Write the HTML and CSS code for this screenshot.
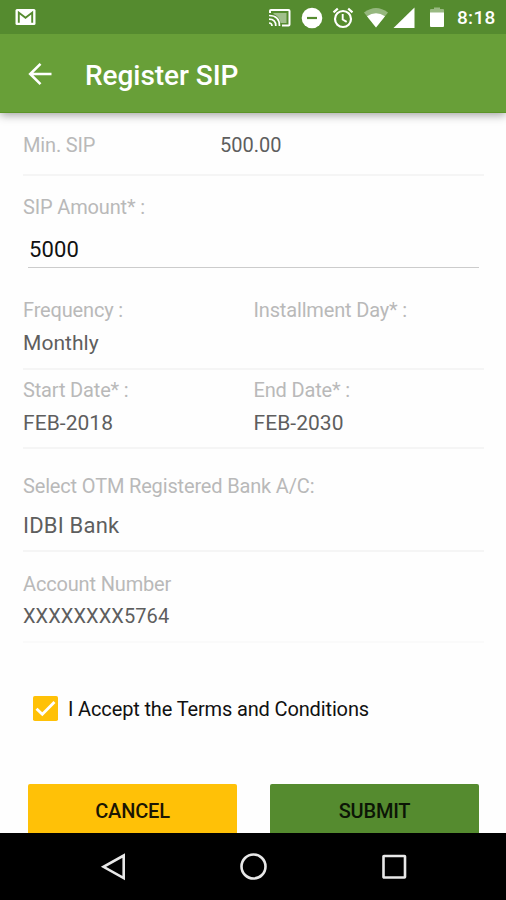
FILE: index.html
```html
<!DOCTYPE html>
<html lang="en">
<head>
<meta charset="utf-8">
<title>Register SIP</title>
<link rel="stylesheet" href="styles.css">
</head>
<body>
<div class="screen">
  <div class="status">
    <svg class="mail" width="22" height="18" viewBox="0 0 22 18"><rect x=".5" y="1" width="20" height="16" rx="1.5" fill="#fff"/><path d="M3.800 14.800V4.600l6.700 5.200 6.700-5.200v10.200" fill="none" stroke="#558b2f" stroke-width="1.900"/></svg>
    <div class="status-icons">
      <svg width="24" height="22" viewBox="0 0 24 22"><path d="M5.500 6h13v10h-6C12 12 9.500 8.500 5.500 7z" fill="#fff" opacity=".45"/><path d="M2 6V3.800Q2 3 3 3h17.500q1 0 1 1v13.500q0 1-1 1H14" fill="none" stroke="#fff" stroke-width="2"/><path d="M1 16q3 0 3 3M1 12.200q6.800 0 6.800 6.800M1 8.500q10.500 0 10.500 10.500" fill="none" stroke="#fff" stroke-width="1.700"/></svg>
      <svg width="22" height="22" viewBox="0 0 22 22"><circle cx="11" cy="11" r="10.300" fill="#fff"/><path d="M6 11h10" stroke="#558b2f" stroke-width="2.200"/></svg>
      <svg width="22" height="22" viewBox="0 0 22 22"><circle cx="11" cy="12" r="8" fill="none" stroke="#fff" stroke-width="2.200"/><path d="M1.500 5.300 5.800 1.700M20.500 5.300 16.200 1.700" stroke="#fff" stroke-width="2.200"/><path d="M10.700 7v5.500l4 2.400" fill="none" stroke="#fff" stroke-width="1.900"/></svg>
      <svg width="26" height="22" viewBox="0 0 26 22"><path d="M1 5.500Q13-3.500 25 5.500L13 20.500z" fill="#fff" opacity=".38"/><path d="M4 9.300q9-6.200 18 0L13 20.500z" fill="#fff"/></svg>
      <svg class="signal" width="22" height="22" viewBox="0 0 22 22"><path d="M21.500.5v20.500H.5z" fill="#fff"/></svg>
      <svg class="battery" width="16" height="22" viewBox="0 0 16 22"><path d="M1 6V3q0-1 1-1h3V.5h6V2h3q1 0 1 1v3z" fill="#fff" opacity=".4"/><path d="M1 5.500h14V19q0 1-1 1H2q-1 0-1-1z" fill="#fff"/></svg>
      <span class="time">8:18</span>
    </div>
  </div>
  <header class="appbar">
    <svg width="24" height="24" viewBox="0 0 24 24"><path d="M23.500 12H2.500M12.500 1.800 2.200 12l10.300 10.200" fill="none" stroke="#fff" stroke-width="2.600"/></svg>
    <h1>Register SIP</h1>
  </header>
  <main class="form">
    <div class="row min"><span class="label">Min. SIP</span><span class="value">500.00</span></div>
    <div class="amount"><span class="label">SIP Amount* :</span><div class="input">5000</div></div>
    <div class="row pair freq">
      <div><div class="label">Frequency :</div><div class="value">Monthly</div></div>
      <div><div class="label">Installment Day* :</div></div>
    </div>
    <div class="row pair dates">
      <div><div class="label">Start Date* :</div><div class="value">FEB-2018</div></div>
      <div><div class="label">End Date* :</div><div class="value">FEB-2030</div></div>
    </div>
    <div class="row bank"><div class="label">Select OTM Registered Bank A/C:</div><div class="value">IDBI Bank</div></div>
    <div class="row account"><div class="label">Account Number</div><div class="value">XXXXXXXX5764</div></div>
    <div class="terms">
      <svg width="25" height="25" viewBox="0 0 25 25"><rect width="25" height="25" rx="1.800" fill="#ffc107"/><path d="M3.500 12.700 9.300 18.300 21.500 6" fill="none" stroke="#fff" stroke-width="2.800"/></svg>
      <span>I Accept the Terms and Conditions</span>
    </div>
    <div class="buttons"><div class="btn cancel">CANCEL</div><div class="btn submit">SUBMIT</div></div>
  </main>
  <nav class="nav">
    <svg width="28" height="28" viewBox="0 0 28 28"><path d="M23.700 2.500v22.600L3.500 13.800z"/></svg>
    <svg width="28" height="28" viewBox="0 0 28 28"><circle cx="13.500" cy="13.500" r="12"/></svg>
    <svg width="28" height="28" viewBox="0 0 28 28"><rect x="3.500" y="3" width="21.500" height="21.500" rx=".5"/></svg>
  </nav>
</div>
</body>
</html>
```
FILE: styles.css
```css
* { box-sizing: border-box; }
body { margin: 0; font-family: Roboto, "Liberation Sans", sans-serif; background: #fff; }
svg { display: block; flex: none; }
.screen { width: 506px; height: 900px; display: flex; flex-direction: column; overflow: hidden; }
.status { height: 34px; flex: none; background: #558b2f; display: flex; justify-content: space-between; padding: 8px 10px 0 15px; position: relative; z-index: 2; }
.status-icons { display: flex; gap: 9px; height: 22px; align-items: center; margin-top: -1px; }
.status-icons svg { position: relative; left: 1px; }
.status-icons .signal { margin-left: -4px; left: 0; }
.status-icons .battery { margin-left: 5px; left: 0; }
.time { width: 39px; margin-left: 3px; font-size: 19px; font-weight: 500; line-height: 24px; color: #fff; letter-spacing: .3px; white-space: nowrap; }
.appbar { height: 79px; flex: none; background: #689f38; border-bottom: 1px solid #5b9427; box-shadow: 0 2px 9px rgba(0,0,0,.38); display: flex; align-items: center; padding: 2px 0 0 28px; position: relative; z-index: 1; }
h1 { margin: 3px 0 0 33px; font-size: 28px; font-weight: 500; letter-spacing: -.05px; line-height: 32px; color: #fff; white-space: nowrap; }
.form { height: 720px; flex: none; padding: 0 22px 0 23px; overflow: hidden; background: #fefefe; }
.row { border-bottom: 2px solid #f5f5f5; }
.label, .value { font-size: 20px; line-height: 24px; white-space: nowrap; }
.label { color: #b9b9b9; letter-spacing: -.16px; }
.value { color: #5e5e5e; }
.min { height: 63px; display: grid; grid-template-columns: 197px 1fr; padding-top: 20px; }
.amount { height: 122px; padding-top: 19px; }
.input { margin: 14px 5px 0; height: 35px; padding: 3px 1px 0; font-size: 22px; line-height: 28px; letter-spacing: .1px; color: #111; border-bottom: 1px solid #ccc; }
.pair { display: grid; grid-template-columns: 230.500px 1fr; }
.pair .value { margin-top: 9px; font-size: 21px; letter-spacing: .05px; }
.freq { height: 72px; }
.dates { height: 79px; padding-top: 8px; }
.bank { height: 103px; padding-top: 25px; }
.bank .value { margin-top: 16px; font-size: 22px; letter-spacing: .2px; }
.account { height: 91px; padding-top: 20px; border-color: #fafafa; }
.account .value { margin-top: 8px; letter-spacing: .08px; }
.terms { display: flex; gap: 10px; align-items: center; height: 25px; margin: 53px 0 0 10px; font-size: 20px; letter-spacing: -.14px; color: #111; white-space: nowrap; }
.terms span { padding-top: 1px; }
.buttons { display: grid; grid-template-columns: 209px 209px; gap: 33px; margin: 63px 0 0 5px; }
.btn { height: 54px; border-radius: 2px; text-align: center; font-size: 20px; font-weight: 500; line-height: 54px; letter-spacing: -.2px; }
.cancel { background: #ffc107; color: #1b1603; }
.submit { background: #558b2f; color: #0c1506; }
.nav { height: 67px; flex: none; background: #000; display: flex; align-items: center; gap: 112px; padding-left: 100px; }
.nav svg { fill: none; stroke: #e8e8e8; stroke-width: 2.600; }
```
